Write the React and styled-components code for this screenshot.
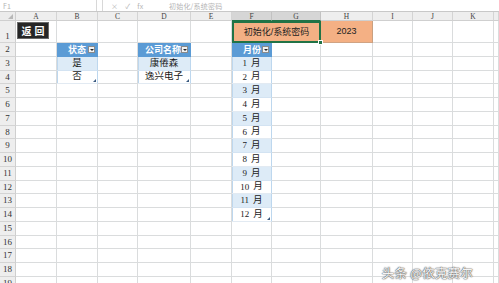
import React from "react";
import styled, { createGlobalStyle } from "styled-components";

const Global = createGlobalStyle`
  html, body { margin: 0; padding: 0; background: #fff; }
  body { font-family: "Liberation Serif", "Noto Sans CJK SC", serif; overflow: hidden; }
  #root { width: 499px; height: 283px; overflow: hidden; position: relative; }
`;

const COLS = [16, 41, 41, 40, 53, 41, 40, 49, 52, 40, 40, 41];
const LETTERS = ["A", "B", "C", "D", "E", "F", "G", "H", "I", "J", "K", ""];
const ROW_H = [14, 14, 13, 14, 14, 14, 13, 14, 14, 14, 13, 14, 14, 14, 13, 14, 14, 14];
const GRID = "#DADCDD";

const Page = styled.div`
  width: 499px;
  height: 283px;
  display: flex;
  flex-direction: column;
  position: relative;
`;

const FormulaBar = styled.div`
  height: 11px;
  flex: none;
  display: flex;
  align-items: stretch;
  border-bottom: 1px solid #c8c8c8;
  background: #fff;
  overflow: hidden;
`;

const BarBox = styled.div`
  width: ${(p) => p.$w}px;
  flex: none;
  display: flex;
  align-items: center;
  overflow: hidden;
  border-right: ${(p) => (p.$sep ? "1px solid #d8d8d8" : "none")};
  padding-left: ${(p) => p.$pad || 0}px;
  box-sizing: border-box;
  color: #b4b4b4;
  font-family: "Noto Sans CJK SC", sans-serif;
  font-size: 7px;
  line-height: 8px;
  gap: 7px;
`;

const BarText = styled.span`
  white-space: nowrap;
  letter-spacing: 0.2px;
`;

const Sheet = styled.div`
  display: grid;
  grid-template-columns: ${COLS.map((c) => c + "px").join(" ")} 1fr;
  grid-template-rows: 9px 22px ${ROW_H.map((h) => h + "px").join(" ")};
  flex: none;
`;

const Corner = styled.div`
  background: #ececec;
  border-right: 1px solid #cfcfcf;
  border-bottom: 1px solid #cfcfcf;
  box-sizing: border-box;
  position: relative;
  &::after {
    content: "";
    position: absolute;
    right: 2px;
    bottom: 1px;
    border-left: 5px solid transparent;
    border-bottom: 5px solid #b8b8b8;
  }
`;

const ColHeader = styled.div`
  background: ${(p) => (p.$sel ? "#d6d6d6" : "#eeeeee")};
  border-right: 1px solid ${(p) => (p.$sel ? "#c2c2c2" : "#d4d4d4")};
  border-bottom: 1px solid ${(p) => (p.$sel ? "#217346" : "#cfcfcf")};
  box-sizing: border-box;
  display: flex;
  align-items: center;
  justify-content: center;
  font-family: "Liberation Serif", serif;
  font-size: 7.5px;
  line-height: 1;
  color: #444;
  padding-top: 2px;
`;

const RowHeader = styled.div`
  background: #eeeeee;
  border-right: 1px solid #cfcfcf;
  border-bottom: 1px solid #d4d4d4;
  box-sizing: border-box;
  display: flex;
  align-items: ${(p) => (p.$tall ? "flex-end" : "center")};
  justify-content: center;
  font-family: "Liberation Serif", serif;
  font-size: 9px;
  line-height: 1;
  color: #333;
  padding-bottom: ${(p) => (p.$tall ? "1px" : "0")};
`;

const Cell = styled.div`
  border-right: 1px solid ${GRID};
  border-bottom: 1px solid ${GRID};
  box-sizing: border-box;
  min-width: 0;
  position: relative;
`;

const TableCell = styled.div`
  background: ${(p) => (p.$band ? "#DDEBF7" : "#ffffff")};
  border-right: 1px solid #BDD7EE;
  border-bottom: 1px solid ${(p) => (p.$band ? "#D3E3F2" : "#E2EAF2")};
  box-shadow: inset 1px 0 #BDD7EE;
  box-sizing: border-box;
  display: flex;
  align-items: center;
  justify-content: center;
  font-family: "Liberation Serif", "Noto Sans CJK SC", serif;
  font-size: 9.5px;
  line-height: 1;
  color: #1a1a1a;
  white-space: nowrap;
  position: relative;
  min-width: 0;
  ${(p) =>
    p.$last &&
    `&::after {
      content: "";
      position: absolute;
      right: 1px;
      bottom: 1px;
      border-left: 3px solid transparent;
      border-bottom: 3px solid #3a5a80;
    }`}
`;

const MonthNum = styled.span`
  font-family: "Liberation Serif", serif;
  font-size: 9px;
  margin-right: 4px;
`;

const TableHead = styled.div`
  background: #5B9BD5;
  border-right: 1px solid #5B9BD5;
  border-bottom: 1px solid #5B9BD5;
  box-sizing: border-box;
  display: flex;
  align-items: center;
  justify-content: flex-end;
  padding-right: ${(p) => p.$pr}px;
  font-family: "Noto Sans CJK SC", sans-serif;
  font-weight: 700;
  font-size: 9px;
  line-height: 1;
  color: #fff;
  white-space: nowrap;
  overflow: hidden;
  position: relative;
`;

const DropButton = styled.span`
  position: absolute;
  right: 2px;
  top: 3px;
  width: 7px;
  height: 7px;
  background: #f2f2f2;
  border: 1px solid #8a8a8a;
  box-sizing: border-box;
  display: flex;
  align-items: center;
  justify-content: center;
  &::after {
    content: "";
    border-left: 2px solid transparent;
    border-right: 2px solid transparent;
    border-top: 2px solid #222;
  }
`;

const ReturnButton = styled.div`
  margin: 1px 0 0 1px;
  width: 32px;
  height: 17px;
  background: #262626;
  border: 1px solid #6a6a6a;
  box-sizing: border-box;
  display: flex;
  align-items: center;
  justify-content: center;
  color: #fff;
  font-family: "Noto Sans CJK SC", sans-serif;
  font-size: 10px;
  font-weight: 700;
  letter-spacing: 3px;
  padding-left: 3px;
  line-height: 1;
`;

const OrangeCell = styled.div`
  grid-column: span ${(p) => p.$span || 1};
  background: #F4B084;
  border: ${(p) => (p.$selected ? "2px solid #217346" : "none")};
  border-right: ${(p) => (p.$selected ? "2px solid #217346" : `1px solid #c9a080`)};
  border-bottom: ${(p) => (p.$selected ? "2px solid #217346" : `1px solid #d0a383`)};
  box-sizing: border-box;
  display: flex;
  align-items: center;
  justify-content: center;
  font-family: "Liberation Sans", "Noto Sans CJK SC", sans-serif;
  font-size: 9px;
  line-height: 1;
  color: #222;
  white-space: nowrap;
  position: relative;
`;

const FillHandle = styled.span`
  position: absolute;
  right: -4px;
  bottom: -4px;
  width: 5px;
  height: 5px;
  background: #217346;
  border: 1px solid #fff;
  box-sizing: border-box;
  z-index: 2;
`;

const Watermark = styled.div`
  position: absolute;
  right: 26px;
  bottom: 4px;
  font-family: "Noto Sans CJK SC", sans-serif;
  font-size: 12.5px;
  line-height: 1;
  color: #f4f4f4;
  letter-spacing: 0.2px;
  text-shadow: 0 0 1px #555, 0 0 1px #555, 0 0 2px #888;
`;

function renderRow(r) {
  const cells = [];
  for (let c = 0; c < LETTERS.length; c++) {
    const key = `${r}-${c}`;
    const col = LETTERS[c];
    if (r === 1) {
      if (col === "A") {
        cells.push(
          <Cell key={key}>
            <ReturnButton>返回</ReturnButton>
          </Cell>
        );
        continue;
      }
      if (col === "F") {
        cells.push(
          <OrangeCell key={key} $span={2} $selected>
            初始化/系统密码
            <FillHandle />
          </OrangeCell>
        );
        continue;
      }
      if (col === "G") continue;
      if (col === "H") {
        cells.push(<OrangeCell key={key}>2023</OrangeCell>);
        continue;
      }
    }
    if (r === 2 && col === "B") {
      cells.push(
        <TableHead key={key} $pr={11}>
          状态
          <DropButton />
        </TableHead>
      );
      continue;
    }
    if (r === 2 && col === "D") {
      cells.push(
        <TableHead key={key} $pr={9}>
          公司名称
          <DropButton />
        </TableHead>
      );
      continue;
    }
    if (r === 2 && col === "F") {
      cells.push(
        <TableHead key={key} $pr={10}>
          月份
          <DropButton />
        </TableHead>
      );
      continue;
    }
    if ((r === 3 || r === 4) && col === "B") {
      cells.push(
        <TableCell key={key} $band={r === 3} $last={r === 4}>
          {r === 3 ? "是" : "否"}
        </TableCell>
      );
      continue;
    }
    if ((r === 3 || r === 4) && col === "D") {
      cells.push(
        <TableCell key={key} $band={r === 3} $last={r === 4}>
          {r === 3 ? "康倦森" : "逸兴电子"}
        </TableCell>
      );
      continue;
    }
    if (r >= 3 && r <= 14 && col === "F") {
      const m = r - 2;
      cells.push(
        <TableCell key={key} $band={m % 2 === 1} $last={r === 14}>
          <MonthNum>{m}</MonthNum>月
        </TableCell>
      );
      continue;
    }
    cells.push(<Cell key={key} />);
  }
  return cells;
}

export default function App() {
  const rowCount = ROW_H.length + 1;
  return (
    <Page>
      <Global />
      <FormulaBar>
        <BarBox $w={97} $sep $pad={3}>
          <BarText>F1</BarText>
        </BarBox>
        <BarBox $w={6} $sep />
        <BarBox $w={64} $pad={8}>
          <BarText>×</BarText>
          <BarText>✓</BarText>
          <BarText>fx</BarText>
        </BarBox>
        <BarBox $w={332} $pad={2}>
          <BarText>初始化/系统密码</BarText>
        </BarBox>
      </FormulaBar>
      <Sheet>
        <Corner />
        {LETTERS.map((l, i) => (
          <ColHeader key={"h" + i} $sel={l === "F" || l === "G"}>
            {l}
          </ColHeader>
        ))}
        {Array.from({ length: rowCount }, (_, i) => i + 1).map((r) => (
          <React.Fragment key={"r" + r}>
            <RowHeader $tall={r === 1}>{r}</RowHeader>
            {renderRow(r)}
          </React.Fragment>
        ))}
      </Sheet>
      <Watermark>头条 @依克赛尔</Watermark>
    </Page>
  );
}
